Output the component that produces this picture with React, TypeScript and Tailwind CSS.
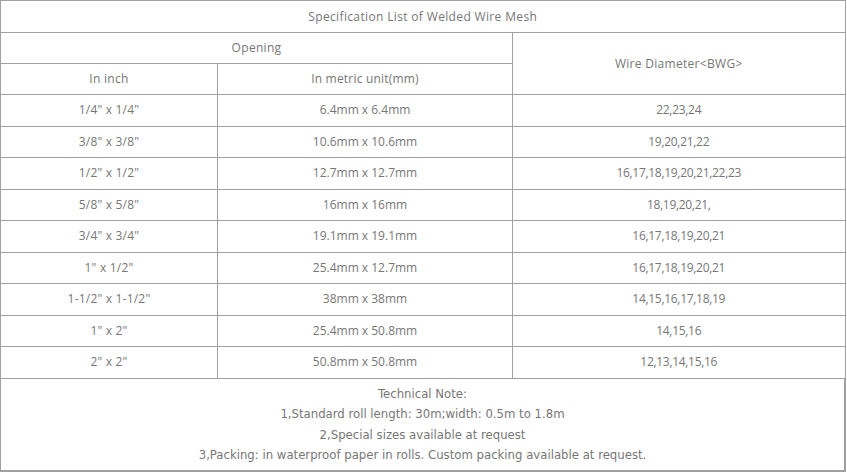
import React from "react";

const rows: [string, string, string][] = [
  ['1/4" x 1/4"', "6.4mm x 6.4mm", "22,23,24"],
  ['3/8" x 3/8"', "10.6mm x 10.6mm", "19,20,21,22"],
  ['1/2" x 1/2"', "12.7mm x 12.7mm", "16,17,18,19,20,21,22,23"],
  ['5/8" x 5/8"', "16mm x 16mm", "18,19,20,21,"],
  ['3/4" x 3/4"', "19.1mm x 19.1mm", "16,17,18,19,20,21"],
  ['1" x 1/2"', "25.4mm x 12.7mm", "16,17,18,19,20,21"],
  ['1-1/2" x 1-1/2"', "38mm x 38mm", "14,15,16,17,18,19"],
  ['1" x 2"', "25.4mm x 50.8mm", "14,15,16"],
  ['2" x 2"', "50.8mm x 50.8mm", "12,13,14,15,16"],
];

export default function App() {
  const cell = "border border-[#a0a0a0] text-center align-middle";
  return (
    <div className="w-[847px] h-[472px] bg-white" style={{ fontFamily: "'Open Sans', sans-serif" }}>
      <table className="w-[846px] border-collapse text-[12px] text-[#777] table-fixed">
        <colgroup>
          <col className="w-[217px]" />
          <col className="w-[295px]" />
          <col />
        </colgroup>
        <tbody>
          <tr className="h-[32px]">
            <td colSpan={3} className={cell + " tracking-[0.35px]"}>Specification List of Welded Wire Mesh</td>
          </tr>
          <tr className="h-[31px]">
            <td colSpan={2} className={cell + " tracking-[0.3px]"}>Opening</td>
            <td rowSpan={2} className={cell + " tracking-[0.3px]"}>Wire Diameter&lt;BWG&gt;</td>
          </tr>
          <tr className="h-[31px]">
            <td className={cell + " tracking-[0.3px]"}>In inch</td>
            <td className={cell + " tracking-[0.2px]"}>In metric unit(mm)</td>
          </tr>
          {rows.map((r, i) => (
            <tr key={i} className="h-[31.5px]">
              <td className={cell + " tracking-[0.2px]"}>{r[0]}</td>
              <td className={cell}>{r[1]}</td>
              <td className={cell + " tracking-[-0.3px]"}>{r[2]}</td>
            </tr>
          ))}
          <tr className="h-[93px]">
            <td colSpan={3} className={cell + " border-b-2 border-r-2"}>
              <div
                className="flex flex-col items-center gap-0 text-[13px] leading-[20.5px] pt-[1px]"
                style={{ fontFamily: "'DejaVu Sans Condensed', 'Liberation Sans Narrow', sans-serif", fontStretch: "condensed" }}
              >
                <div>Technical Note:</div>
                <div>1,Standard roll length: 30m;width: 0.5m to 1.8m</div>
                <div>2,Special sizes available at request</div>
                <div>3,Packing: in waterproof paper in rolls. Custom packing available at request.</div>
              </div>
            </td>
          </tr>
        </tbody>
      </table>
    </div>
  );
}
